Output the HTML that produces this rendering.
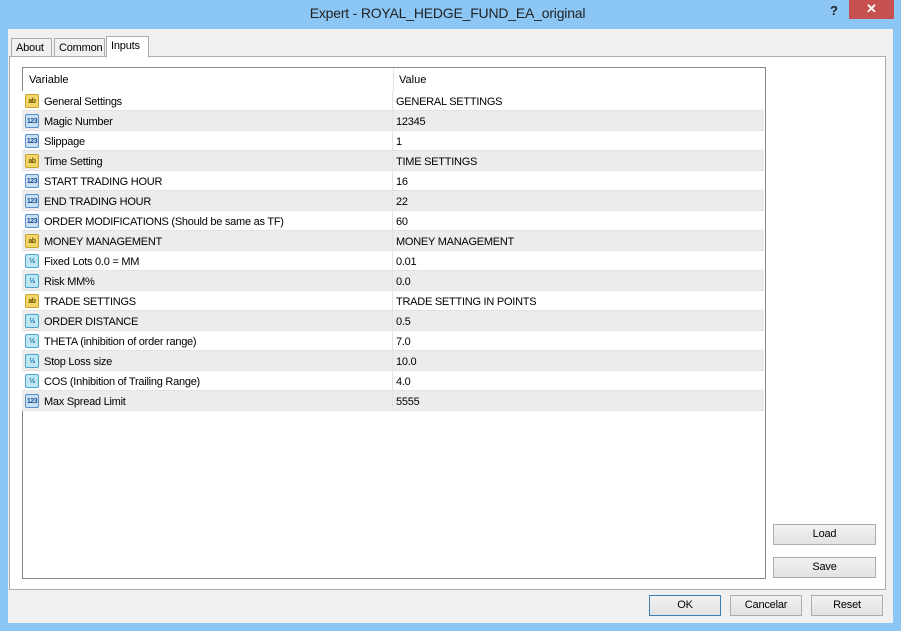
<!DOCTYPE html>
<html><head><style>
*{margin:0;padding:0;box-sizing:border-box}
body{width:901px;height:631px;background:#8cc6f5;font-family:"Liberation Sans",sans-serif;font-size:11px;color:#000;position:relative;overflow:hidden}
.title{position:absolute;top:5px;left:0;width:895px;text-align:center;font-size:14px;color:#222;letter-spacing:-0.2px}
.q{position:absolute;left:830px;top:3px;font-weight:bold;font-size:13px;color:#222}
.close{position:absolute;left:849px;top:0;width:45px;height:19px;background:#c75050;color:#fff;text-align:center;font-size:13px;line-height:18px;font-weight:bold}
.dlg{position:absolute;left:8px;top:29px;width:885px;height:594px;background:#f0f0f0}
.tab{position:absolute;top:9px;height:19px;border:1px solid #adadad;border-bottom:none;background:#f0f0f0;padding:3px 4px 0;font-size:11px;letter-spacing:-0.2px}
.panel{position:absolute;left:1px;top:27px;width:877px;height:534px;background:#fff;border:1px solid #adadad}
.list{position:absolute;left:12px;top:10px;width:744px;height:512px;border:1px solid #828790;background:#fff}
.row{position:absolute;left:0;width:742px;height:20px;border-bottom:1px solid #e3e3e3;letter-spacing:-0.25px}
.row span{position:absolute;top:5px}
.v{left:22px}.val{left:374px}
.sep{position:absolute;left:370px;top:0;width:1px;height:20px;background:#e3e3e3}
.ic{position:absolute;left:3px;top:3px;width:14px;height:14px;font-size:7px;font-weight:bold;text-align:center;line-height:13px;border-radius:2px;letter-spacing:-0.5px}
.ab{background:#f3d76a;border:1px solid #c9a32a;color:#6a5000}
.n{background:#c9dff5;border:1px solid #5a8fc8;color:#1c4f8e}
.d{background:#bfe6f4;border:1px solid #4aa5c8;color:#0d6b8e}
.btn{position:absolute;height:21px;border:1px solid #adadad;background:linear-gradient(#f2f2f2,#e2e2e2);text-align:center;line-height:19px;font-size:11px;letter-spacing:-0.2px}
</style></head><body>
<div class="title">Expert - ROYAL_HEDGE_FUND_EA_original</div>
<div class="q">?</div><div class="close">✕</div>
<div class="dlg">
<div class="tab" style="left:3px;width:41px">About</div>
<div class="tab" style="left:46px;width:51px">Common</div>
<div class="panel">
<div class="list">
<div style="position:absolute;left:0;top:0;width:742px;height:24px;border-bottom:1px solid #e3e3e3"><span style="position:absolute;left:6px;top:6px">Variable</span><span style="position:absolute;left:376px;top:6px">Value</span><div class="sep" style="height:23px"></div></div>
</div>
<div class="btn" style="left:763px;top:467px;width:103px">Load</div>
<div class="btn" style="left:763px;top:500px;width:103px">Save</div>
</div>
<div class="tab" style="left:98px;top:7px;height:22px;width:43px;background:#fff;z-index:2;border-bottom:1px solid #fff">Inputs</div>
<div class="btn" style="left:641px;top:566px;width:72px;border-color:#3c7fb1">OK</div>
<div class="btn" style="left:722px;top:566px;width:72px">Cancelar</div>
<div class="btn" style="left:803px;top:566px;width:72px">Reset</div>
</div>
<div id="rows" style="position:absolute;left:22px;top:91px"></div>
<script>
var r=[["ab","General Settings","GENERAL SETTINGS"],["n","Magic Number","12345"],["n","Slippage","1"],["ab","Time Setting","TIME SETTINGS"],["n","START TRADING HOUR","16"],["n","END TRADING HOUR","22"],["n","ORDER MODIFICATIONS (Should be same as TF)","60"],["ab","MONEY MANAGEMENT","MONEY MANAGEMENT"],["d","Fixed Lots 0.0 = MM","0.01"],["d","Risk MM%","0.0"],["ab","TRADE SETTINGS","TRADE SETTING IN POINTS"],["d","ORDER DISTANCE","0.5"],["d","THETA (inhibition of order range)","7.0"],["d","Stop Loss size","10.0"],["d","COS (Inhibition of Trailing Range)","4.0"],["n","Max Spread Limit","5555"]];
var h="";r.forEach(function(x,i){var t=x[0]=="ab"?"ab":x[0]=="n"?"123":"½";
h+='<div class="row" style="top:'+(i*20)+'px;background:'+(i%2?'#ececec':'#fff')+'"><div class="ic '+x[0]+'">'+t+'</div><span class="v">'+x[1]+'</span><div class="sep"></div><span class="val">'+x[2]+'</span></div>';});
document.getElementById("rows").innerHTML=h;
</script>
</body></html>
